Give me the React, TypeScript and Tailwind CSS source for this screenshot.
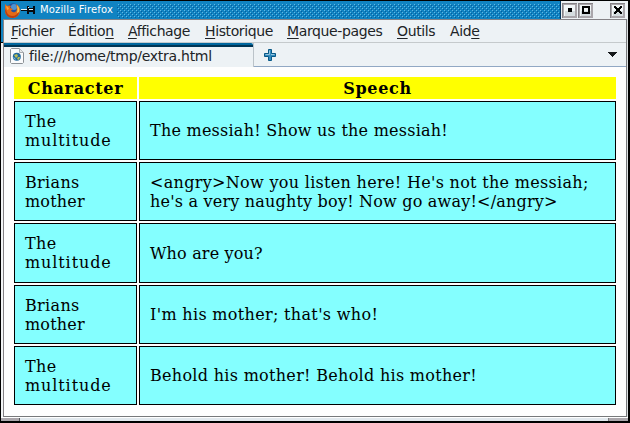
import React from "react";

const menus = [
  { pre: "", key: "F", post: "ichier", box: "w-[57px]" },
  { pre: "Éditio", key: "n", post: "", box: "w-[60px]" },
  { pre: "", key: "A", post: "ffichage", box: "w-[77px]" },
  { pre: "", key: "H", post: "istorique", box: "w-[82px]" },
  { pre: "", key: "M", post: "arque-pages", box: "w-[110px]" },
  { pre: "", key: "O", post: "utils", box: "w-[53px]" },
  { pre: "Aid", key: "e", post: "", box: "w-[40px]" },
];

const multitude = [
  { text: "The", track: "tracking-[0.4px]" },
  { text: "multitude", track: "tracking-[0.9px]" },
];
const mother = [
  { text: "Brians", track: "tracking-[0.33px]" },
  { text: "mother", track: "tracking-[0.2px]" },
];

const rows = [
  { who: multitude, speech: [{ text: "The messiah! Show us the messiah!", track: "tracking-[0.24px]" }], size: "h-[59px] mb-[2px]" },
  {
    who: mother,
    speech: [
      { text: "<angry>Now you listen here! He's not the messiah;", track: "tracking-[0.31px]" },
      { text: "he's a very naughty boy! Now go away!</angry>", track: "tracking-[0.2px]" },
    ],
    size: "h-[59px] mb-[2px]",
  },
  { who: multitude, speech: [{ text: "Who are you?", track: "tracking-[0.17px]" }], size: "h-[60px] mb-[2px]" },
  { who: mother, speech: [{ text: "I'm his mother; that's who!", track: "tracking-[0.33px]" }], size: "h-[59px] mb-[2px]" },
  { who: multitude, speech: [{ text: "Behold his mother! Behold his mother!", track: "tracking-[0.3px]" }], size: "h-[59px]" },
];

function FirefoxIcon() {
  return (
    <svg width="17" height="17" viewBox="0 0 17 17" className="shrink-0">
      <circle cx="9" cy="7.5" r="6.3" fill="#244f9c" />
      <circle cx="10" cy="5" r="3" fill="#4f93d2" />
      <path d="M1 2 L3 4 Q5 3 7 4 L6 6 L9 7 L7 8.5 Q8 11 11 10 Q13 9 13 6 L12 2 Q17 5 16 10 Q14 16 8 16 Q2 15 1 10 Z" fill="#e66a16" />
      <path d="M2 6 Q2 13 8 14 Q13 14 15 9 Q15 15 9 16 Q2 16 1 9 Z" fill="#b93f13" />
      <path d="M13 3 Q16 6 15 10 L13 11 Q14 7 13 3 Z" fill="#f9c545" />
      <path d="M2 4 L4 5 L5 7 L3 8 Z" fill="#f7a23a" />
    </svg>
  );
}

function PinIcon() {
  return (
    <svg width="14" height="10" viewBox="0 0 14 10" shapeRendering="crispEdges" className="shrink-0">
      <path d="M0 4h6v2H0z M6 1h2v8H6z M8 3h4v4H8z M12 1h2v8h-2z" fill="#050a10" />
      <path d="M0 4h6v1H0z M8 4h4v1H8z M7 2h1v1H7z" fill="#e8f2f7" />
    </svg>
  );
}

function PageIcon() {
  return (
    <svg width="14" height="16" viewBox="0 0 14 16" className="shrink-0">
      <path d="M1.5 .5h8l4 4v10l-1 1h-11l-1-1v-13z" fill="#fafbfc" stroke="#8b9095" />
      <path d="M9.5 .5v4h4" fill="#e4e7e9" stroke="#a8acb0" />
      <circle cx="6.8" cy="8.8" r="4" fill="#21699d" />
      <path d="M4 7 L7 6 L8 8 L6 10z M8 9h2l-1 3-2-1z" fill="#b8bd54" />
      <path d="M3 9l2 1 1 2-2-1z" fill="#79b5d5" />
    </svg>
  );
}

function WindowButton({ kind }: { kind: "min" | "max" | "close" }) {
  return (
    <svg width="15" height="15" viewBox="0 0 15 15" shapeRendering="crispEdges" className="shrink-0">
      <path d="M0 0h15v15H0z" fill="#858286" />
      <path d="M1 1h14v14H1z" fill="#aaa6ab" />
      <path d="M2 2h11v11H2z" fill="#f2f6f7" />
      <path d="M3 8h10v5H3z" fill="#d5dcdf" />
      {kind === "min" && <path d="M6 5h4v4H6z" fill="#000" />}
      {kind === "max" && <path d="M4 3h8v8H4z M6 5v4h4V5z" fill="#000" fillRule="evenodd" />}
      {kind === "close" && (
        <path d="M4 3h2v1h1v1h2V4h1V3h2v2h-1v1h-1v2h1v1h1v2h-2v-1H9V9H7v1H6v1H4V9h1V8h1V6H5V5H4z" fill="#000" />
      )}
    </svg>
  );
}

function TitleBar() {
  return (
    <div className="flex h-[18px] w-full shrink-0 bg-[#1083c2]">
      <div className="flex h-full w-[116px] items-center pl-[3px]">
        <FirefoxIcon />
        <PinIcon />
        <span className="ml-[5px] text-[10px] leading-[18px] tracking-[0.15px] whitespace-nowrap text-white">Mozilla Firefox</span>
      </div>
      <svg width="444" height="18" className="shrink-0" shapeRendering="crispEdges">
        <defs>
          <pattern id="grip" width="4" height="4" patternUnits="userSpaceOnUse">
            <path d="M1 3h1v1H1z M3 1h1v1H3z" fill="#62b9e5" />
            <path d="M2 0h1v1H2z M0 2h1v1H0z" fill="#075e9c" />
          </pattern>
        </defs>
        <rect y="3" width="443" height="14" fill="url(#grip)" />
        <rect x="443" width="1" height="18" fill="#07365a" />
      </svg>
      <div className="flex h-full flex-1 bg-[#edf1f4] pt-[2px] pl-[1px]">
        <WindowButton kind="min" />
        <div className="w-[1px]" />
        <WindowButton kind="max" />
        <div className="w-[17px]" />
        <WindowButton kind="close" />
      </div>
    </div>
  );
}

export default function App() {
  return (
    <div className="flex h-[423px] w-[630px] flex-col overflow-hidden border-t border-r-2 border-b-2 border-l border-black bg-[#f3f5f6] font-['DejaVu_Sans',sans-serif]">
      <TitleBar />
      <div className="flex h-[398px] shrink-0">
        <div className="w-[2px] shrink-0">
          <div className="h-[23px] bg-[#1083c2]" />
          <div className="h-[1px] bg-black" />
        </div>
        <div className="flex w-[624px] flex-col border border-t-[#858286] border-r-[#77797b] border-b-[#77797b] border-l-[#858286] bg-[#fefefe]">
          <div className="flex h-[23px] shrink-0 border-b border-[#c5cacc] bg-[#edf2f5] pl-[7px] text-[14px] leading-[22px] tracking-[-0.38px] text-[#202326]">
            {menus.map((m) => (
              <div key={m.key + m.post + m.pre} className={`${m.box} shrink-0 whitespace-nowrap`}>
                {m.pre}
                <span className="underline decoration-1 underline-offset-2">{m.key}</span>
                {m.post}
              </div>
            ))}
          </div>
          <div className="flex h-[24px] shrink-0 bg-[#edf2f5]">
            <div className="flex w-[250px] flex-col border-r border-[#bbc3c9]">
              <div className="h-[4px] rounded-tr-[2px] border-b-2 border-[#003554] bg-[#00679e]" />
              <div className="flex h-[18px] items-center pl-[6px]">
                <PageIcon />
                <span className="ml-[5px] text-[14px] leading-[16px] tracking-[-0.27px] whitespace-nowrap text-[#202326]">file:///home/tmp/extra.html</span>
              </div>
            </div>
            <div className="flex flex-1 items-center justify-between border-b border-[#91a8c4] pr-[9px] pl-[10px]">
              <svg width="12" height="12" viewBox="0 0 12 12">
                <path d="M4.5 .5h3v4h4v3h-4v4h-3v-4h-4v-3h4z" fill="#328abd" stroke="#075887" strokeLinejoin="round" />
                <path d="M5.5 1.5v4h-4M7 5.5h3.5" fill="none" stroke="#94c5df" />
              </svg>
              <svg width="9" height="5" viewBox="0 0 9 5" shapeRendering="crispEdges">
                <path d="M0 0h9v1H8v1H7v1H6v1H5v1H4V4H3V3H2V2H1V1H0z" fill="#15181a" />
              </svg>
            </div>
          </div>
          <main className="pt-[10px] pl-[10px] font-['DejaVu_Serif',serif] text-[16px] leading-[19px] text-black">
            <div className="mb-[2px] flex h-[22px] gap-[2px] text-center leading-[24px] font-bold tracking-[0.7px]">
              <div className="w-[123px] bg-[#ffff00]">Character</div>
              <div className="w-[477px] bg-[#ffff00]">Speech</div>
            </div>
            {rows.map((r, i) => (
              <div key={i} className={`flex gap-[2px] ${r.size}`}>
                <div className="flex w-[123px] flex-col justify-center border border-black bg-[#84ffff] pl-[10px]">
                  {r.who.map((t) => <div key={t.text} className={t.track}>{t.text}</div>)}
                </div>
                <div className="flex w-[477px] flex-col justify-center border border-black bg-[#84ffff] pl-[10px] whitespace-nowrap">
                  {r.speech.map((t) => <div key={t.text} className={t.track}>{t.text}</div>)}
                </div>
              </div>
            ))}
          </main>
        </div>
        <div className="w-[1px] bg-[#dce0e2]" />
      </div>
      <div className="flex h-[4px] shrink-0 border-t border-white">
        <div className="w-[19px] border-r border-[#55595c] bg-[#aaa6ab]" />
        <div className="flex-1 bg-[#e1e8ed]" />
        <div className="w-[20px] border-l border-[#77797b] bg-[#aaa6ab]" />
      </div>
    </div>
  );
}
